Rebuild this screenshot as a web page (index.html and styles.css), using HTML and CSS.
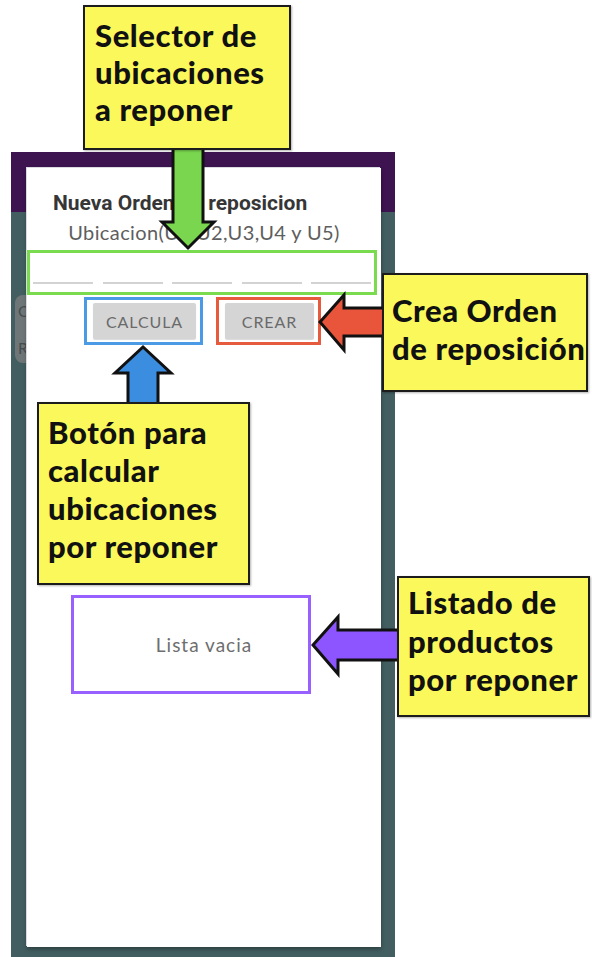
FILE: index.html
```html
<!DOCTYPE html>
<html lang="es">
<head>
    <meta charset="UTF-8">
    <meta name="viewport" content="width=device-width, initial-scale=1.0">
    <title>Nueva Orden de reposicion</title>
    <link rel="stylesheet" href="styles.css">
</head>
<body>
    <div class="stage">
        <div class="phone">
            <div class="appbar"></div>
            <div class="card"><span>C</span><span>R</span></div>

            <div class="dialog">
                <h2 class="dlg-title">Nueva Orden de reposicion</h2>
                <p class="dlg-sub">Ubicacion(U1,U2,U3,U4 y U5)</p>

                <div class="mark mark-green loc-row">
                    <input class="loc" type="text">
                    <input class="loc" type="text">
                    <input class="loc" type="text">
                    <input class="loc" type="text">
                    <input class="loc" type="text">
                </div>

                <div class="actions">
                    <span class="mark mark-blue"><button class="btn btn-calc">CALCULA</button></span>
                    <span class="mark mark-red"><button class="btn btn-crear">CREAR</button></span>
                </div>

                <div class="mark mark-purple list">Lista vacia</div>
            </div>
        </div>

        <!-- callout arrows -->
        <svg class="arrows" width="592" height="957" viewBox="0 0 592 957">
            <polygon class="arr arr-green" points="173,146 173,222 162,222 188,248 214,222 203,222 203,146"/>
            <polygon class="arr arr-blue" points="128,406 128,373 115,373 143,347 171,373 158,373 158,406"/>
            <polygon class="arr arr-red" points="386,308 344,308 344,295 320,322 344,350 344,336 386,336"/>
            <polygon class="arr arr-purple" points="401,630 338,630 338,617 313,645 338,674 338,660 401,660"/>
        </svg>

        <div class="note note-sel">Selector de<br>ubicaciones<br>a reponer</div>
        <div class="note note-crea">Crea Orden<br>de reposición</div>
        <div class="note note-calc">Botón para<br>calcular<br>ubicaciones<br>por reponer</div>
        <div class="note note-list">Listado de<br>productos<br>por reponer</div>
    </div>
</body>
</html>
```

FILE: styles.css
```css
body {
    margin: 0;
    background-color: #fff;
    font-family: Lato, "Open Sans", sans-serif;
}
.stage {
    position: relative;
    width: 592px;
    height: 957px;
    overflow: hidden;
}
.phone {
    position: relative;
    margin: 152px 0 0 11px;
    width: 384px;
    height: 805px;
    background-color: #425e60;
}
.appbar {
    height: 60px;
    background-color: #3d1450;
}
.card {
    display: flex;
    flex-direction: column;
    justify-content: space-between;
    margin: 83px 0 0 4px;
    width: 350px;
    height: 68px;
    padding: 6px 3px;
    box-sizing: border-box;
    background-color: #6f7677;
    border-radius: 8px;
    color: #474d4e;
    font-size: 16px;
}
.dialog {
    position: absolute;
    top: 16px;
    left: 16px;
    width: 354px;
    height: 779px;
    background-color: #fff;
    box-shadow: -1px -1px 0 #d9dbe0, 0 2px 4px rgba(0, 0, 0, 0.35);
}
.dlg-title {
    margin: 24px 0 0 26px;
    font-family: Roboto, sans-serif;
    font-weight: bold;
    font-size: 21px;
    line-height: 23px;
    color: #363636;
}
.dlg-sub {
    margin: 6px 0 0 0;
    text-align: center;
    font-size: 20px;
    line-height: 22px;
    letter-spacing: 0.4px;
    color: #5e5e5e;
}
.mark {
    border: 3px solid;
    box-sizing: border-box;
}
.mark-green { border-color: #7bdb4f; }
.mark-blue { border-color: #4b9ae6; }
.mark-red { border-color: #e65a3e; }
.mark-purple { border-color: #9860ff; }
.loc-row {
    display: flex;
    justify-content: space-between;
    margin-top: 7px;
    width: 350px;
    height: 45px;
    padding: 0 3px 8px 3px;
    align-items: flex-end;
}
.loc {
    width: 60px;
    height: 31px;
    padding: 0;
    border: none;
    border-bottom: 2px solid #d3d3d3;
    box-sizing: border-box;
    background: transparent;
}
.actions {
    display: flex;
    gap: 13px;
    margin-top: 2px;
    padding-left: 57px;
}
.actions .mark {
    display: block;
    padding: 3px 4px 3px 6px;
}
.btn {
    display: block;
    height: 36px;
    padding: 0;
    border: none;
    border-radius: 2px;
    background-color: #d5d5d5;
    box-shadow: 0 1px 1px rgba(0, 0, 0, 0.15);
    font-family: Lato, sans-serif;
    font-size: 16px;
    letter-spacing: 0.9px;
    color: #6a6a6a;
}
.btn-calc { width: 103px; }
.btn-crear { width: 89px; }
.list {
    display: flex;
    align-items: center;
    justify-content: center;
    margin: 250px 0 0 44px;
    width: 240px;
    height: 99px;
    padding-left: 26px;
    font-size: 19px;
    letter-spacing: 1px;
    color: #6e6e6e;
}
.arrows {
    position: absolute;
    top: 0;
    left: 0;
}
.arr {
    stroke: #111;
    stroke-width: 3;
    stroke-linejoin: miter;
}
.arr-green { fill: #79d64e; }
.arr-blue { fill: #3b8de0; }
.arr-red { fill: #e8553a; }
.arr-purple { fill: #8c55ff; }
.note {
    position: absolute;
    box-sizing: border-box;
    background-color: #fbf85c;
    border: 2px solid #1c1c1c;
    box-shadow: 1px 1px 2px rgba(0, 0, 0, 0.3);
    font-family: Lato, sans-serif;
    font-weight: 900;
    font-size: 31px;
    line-height: 37px;
    letter-spacing: 0.6px;
    color: #111;
    white-space: nowrap;
}
.note-sel {
    left: 83px;
    top: 5px;
    width: 208px;
    height: 145px;
    padding: 10px 0 0 10px;
}
.note-crea {
    left: 382px;
    top: 273px;
    width: 206px;
    height: 119px;
    padding: 16px 0 0 8px;
    line-height: 38px;
}
.note-calc {
    left: 37px;
    top: 402px;
    width: 213px;
    height: 183px;
    padding: 9px 0 0 9px;
    line-height: 38px;
}
.note-list {
    left: 397px;
    top: 576px;
    width: 193px;
    height: 141px;
    padding: 5px 0 0 9px;
    line-height: 38.5px;
}
```
